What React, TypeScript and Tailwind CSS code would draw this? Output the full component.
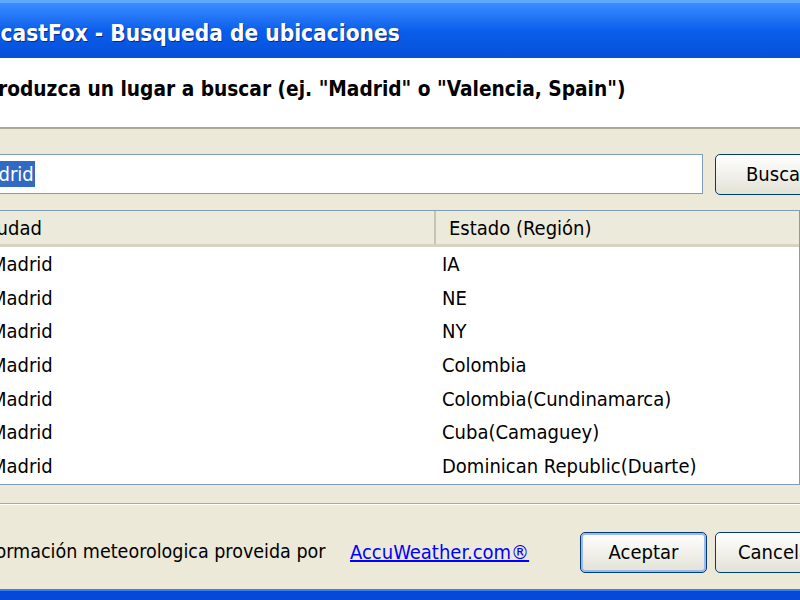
const rows = [
  ['Madrid', 'IA'],
  ['Madrid', 'NE'],
  ['Madrid', 'NY'],
  ['Madrid', 'Colombia'],
  ['Madrid', 'Colombia(Cundinamarca)'],
  ['Madrid', 'Cuba(Camaguey)'],
  ['Madrid', 'Dominican Republic(Duarte)'],
];

const App: React.FC = () => {
  return (
    <div
      className="w-[800px] h-[600px] overflow-hidden bg-[#ECE9D8] flex flex-col text-black"
      style={{ fontFamily: '"DejaVu Sans Condensed", "DejaVu Sans", sans-serif' }}
    >
      {/* title bar */}
      <div className="h-[58px] shrink-0 flex items-center pt-[6px] bg-gradient-to-b from-[#3A8CFF] via-[#0A5EEB] to-[#0650DA] border-t-[3px] border-[#5FA8FF]">
        <span className="-ml-[50px] whitespace-nowrap text-[22.5px] font-bold text-white [text-shadow:1px_1px_0_#0a2a8a]">
          ForecastFox - Busqueda de ubicaciones
        </span>
      </div>

      {/* header */}
      <div className="h-[71px] shrink-0 bg-white flex items-center pb-[6px] border-b-2 border-[#ACA899]">
        <span className="-ml-[31px] whitespace-nowrap text-[20.7px] font-bold">
          Introduzca un lugar a buscar (ej. "Madrid" o "Valencia, Spain")
        </span>
      </div>

      {/* search row */}
      <div className="flex items-center gap-3 mt-[24px] h-[42px] shrink-0">
        <div className="-ml-[4px] w-[707px] shrink-0 h-[40px] bg-white border border-[#7F9DB9] flex items-center">
          <span className="-ml-[26px] bg-[#316AC5] text-white text-[20px] leading-[26px] px-[1px]">Madrid</span>
        </div>
        <button className="w-[100px] h-[41px] shrink-0 rounded-[5px] border border-[#003C74] bg-gradient-to-b from-white to-[#E3E2D7] text-[20px] text-left pl-[30px]">
          Buscar
        </button>
      </div>

      {/* list */}
      <div className="mt-[15px] h-[275px] shrink-0 -ml-[2px] border border-[#7F9DB9] bg-white flex flex-col">
        <div className="h-[36px] shrink-0 flex bg-[#EBEADB] border-b-[3px] border-[#D6D3C2] text-[20px]">
          <div className="w-[437px] shrink-0 border-r-2 border-[#C7C5B2] flex items-center">
            <span className="-ml-[20px]">Ciudad</span>
          </div>
          <div className="flex items-center pl-[13px]">Estado (Región)</div>
        </div>
        <div className="flex flex-col text-[20px]">
          {rows.map(([city, region], i) => (
            <div key={i} className="h-[33.7px] flex items-center">
              <span className="w-[451px] -ml-[8px] shrink-0">{city}</span>
              <span className="whitespace-nowrap">{region}</span>
            </div>
          ))}
        </div>
      </div>

      {/* separator */}
      <div className="mt-[18px] h-[2px] shrink-0 border-t border-[#ACA899] border-b border-b-white" />

      {/* footer */}
      <div className="flex items-center h-[42px] mt-[26px] shrink-0 text-[20px]">
        <span className="-ml-[27px] w-[377px] shrink-0 whitespace-nowrap text-[19.5px]">Información meteorologica proveida por</span>
        <div className="w-[230px] shrink-0">
          <a href="#" className="text-[#0000FF] underline whitespace-nowrap">AccuWeather.com®</a>
        </div>
        <button className="w-[127px] h-[41px] shrink-0 rounded-[5px] border border-[#003C74] bg-gradient-to-b from-white to-[#E3E2D7] shadow-[inset_0_0_0_2px_#9DB9EB]">
          Aceptar
        </button>
        <button className="ml-[8px] w-[110px] h-[41px] shrink-0 rounded-[5px] border border-[#003C74] bg-gradient-to-b from-white to-[#E3E2D7] text-left pl-[22px]">
          Cancelar
        </button>
      </div>

      <div className="flex-1" />
      <div className="h-[11px] shrink-0 bg-[#0648D8] border-t-2 border-[#3C7EF0]" />
    </div>
  );
};

export default App;
